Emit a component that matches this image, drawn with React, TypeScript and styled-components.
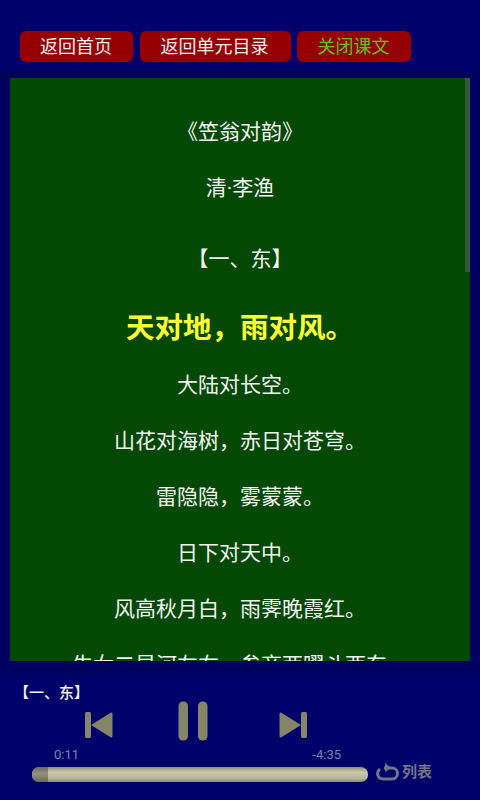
import styled, { createGlobalStyle } from 'styled-components';

const cjk = `'Roboto', 'Noto Sans CJK SC', sans-serif`;

const GlobalStyle = createGlobalStyle`
  html, body {
    background-color: #00006a;
    margin: 0;
    padding: 0;
  }
`;

interface LineProps {
  gap?: number
}

interface NavButtonProps {
  width: number
  active?: boolean
}

const lines = [
  '大陆对长空。',
  '山花对海树，赤日对苍穹。',
  '雷隐隐，雾蒙蒙。',
  '日下对天中。',
  '风高秋月白，雨霁晚霞红。',
  '牛女二星河左右，参商两曜斗西东。',
];

const PrevIcon = () => (
  <SkipSvg viewBox="0 0 30 30">
    <rect x="1" y="2" width="6" height="26" rx="1.5" fill="#85856a" />
    <path d="M7 15 L27 2.500 Q28.500 2 28.500 4 L28.500 26 Q28.500 28 27 27.500 Z" fill="#85856a" />
  </SkipSvg>
);

const NextIcon = () => (
  <NextSvg viewBox="0 0 30 30">
    <rect x="23" y="2" width="6" height="26" rx="1.500" fill="#85856a" />
    <path d="M23 15 L3 2.500 Q1.500 2 1.500 4 L1.500 26 Q1.500 28 3 27.500 Z" fill="#85856a" />
  </NextSvg>
);

const PauseIcon = () => (
  <svg width="30" height="40" viewBox="0 0 30 40">
    <rect x="0.500" y="0.500" width="9.500" height="39" rx="4.500" fill="#85856a" />
    <rect x="20" y="0.500" width="9.500" height="39" rx="4.500" fill="#85856a" />
  </svg>
);

const LoopIcon = () => (
  <svg width="24" height="18" viewBox="0 0 24 18">
    <path d="M8 5 H16 A5.500 5.500 0 0 1 16 16 H7 A5.500 5.500 0 0 1 4 6" fill="none" stroke="#73748c" strokeWidth="3" />
    <path d="M9 0 L15 5 L9 9 Z" fill="#73748c" />
  </svg>
);

export default function App() {
  return (
    <Page>
      <GlobalStyle />
      <Toolbar>
        <NavButton width={113}>返回首页</NavButton>
        <NavButton width={151}>返回单元目录</NavButton>
        <NavButton width={114} active>关闭课文</NavButton>
      </Toolbar>
      <PanelFrame>
        <TextPanel>
          <ScrollThumb />
          <Line>《笠翁对韵》</Line>
          <Line>清·李渔</Line>
          <Line gap={15}>【一、东】</Line>
          <CurrentLine gap={14}>天对地，雨对风。</CurrentLine>
          {lines.map(line => (
            <Line key={line}>{line}</Line>
          ))}
        </TextPanel>
      </PanelFrame>
      <Player>
        <TrackTitle>【一、东】</TrackTitle>
        <Controls>
          <PrevIcon />
          <PauseIcon />
          <NextIcon />
        </Controls>
        <Times>
          <span>0:11</span>
          <span>-4:35</span>
        </Times>
        <SeekRow>
          <SeekBar>
            <SeekFill />
          </SeekBar>
          <LoopMode>
            <LoopIcon />
            <LoopLabel>列表</LoopLabel>
          </LoopMode>
        </SeekRow>
      </Player>
    </Page>
  );
}

const Page = styled.div`
  background-color: #00006a;
  display: flex;
  flex-direction: column;
  font-family: ${cjk};
  height: 800px;
  overflow: hidden;
  width: 480px;
`;

const Toolbar = styled.div`
  display: flex;
  gap: 6.500px;
  padding: 31px 0 0 20px;
`;

const NavButton = styled.div<NavButtonProps>`
  align-items: center;
  background-color: #960000;
  border-radius: 6px;
  box-sizing: border-box;
  color: ${({ active }) => (active ? '#5fc41a' : '#f4f0f0')};
  display: flex;
  font-size: 18px;
  height: 31px;
  justify-content: center;
  padding: 0 1px 3px 0;
  width: ${({ width }) => `${width}px`};
`;

const PanelFrame = styled.div`
  background-color: #000060;
  height: 597px;
  margin-top: 9px;
  padding: 7px 10px 0;
`;

const TextPanel = styled.div`
  background-color: #034803;
  box-sizing: border-box;
  color: #f2f7f2;
  height: 583px;
  overflow: hidden;
  padding-top: 26px;
  position: relative;
  text-align: center;
  width: 460px;
`;

const ScrollThumb = styled.div`
  background-color: #2f5a3c;
  height: 194px;
  position: absolute;
  right: 0;
  top: 0;
  width: 5px;
`;

const Line = styled.div<LineProps>`
  font-size: 21px;
  line-height: 56px;
  margin-top: ${({ gap }) => gap ?? 0}px;
  white-space: nowrap;
`;

const CurrentLine = styled(Line)`
  color: #ffff33;
  font-size: 28.500px;
  font-weight: 700;
`;

const Player = styled.div`
  display: flex;
  flex-direction: column;
  padding: 9px 0 0 20px;
`;

const TrackTitle = styled.div`
  color: #f4f4ff;
  font-size: 15px;
  font-weight: 500;
  line-height: 18px;
  margin-left: -6px;
`;

const Controls = styled.div`
  align-items: flex-start;
  display: flex;
  gap: 64px;
  height: 40px;
  margin: -1px 0 0 64px;
`;

const SkipSvg = styled.svg`
  height: 30px;
  margin-top: 9px;
  width: 30px;
`;

const NextSvg = styled(SkipSvg)`
  margin-left: 6px;
`;

const Times = styled.div`
  color: #8080a6;
  display: flex;
  font-size: 13px;
  justify-content: space-between;
  line-height: 14px;
  margin: 7px 0 0 34px;
  width: 287px;
`;

const SeekRow = styled.div`
  align-items: flex-start;
  display: flex;
  gap: 8px;
  margin-left: 12px;
`;

const SeekBar = styled.div`
  background: linear-gradient(#8f8f78, #c9c9ac 35%, #b7b79b 75%, #8a8a78);
  border-radius: 7px;
  height: 15px;
  margin-top: 5px;
  overflow: hidden;
  width: 336px;
`;

const SeekFill = styled.div`
  background: linear-gradient(#6a6a5c, #92927c 45%, #6a6a5c);
  height: 100%;
  width: 16px;
`;

const LoopMode = styled.div`
  align-items: center;
  display: flex;
  gap: 2px;
  margin-top: 1px;
`;

const LoopLabel = styled.span`
  color: #73748c;
  font-size: 15px;
  font-weight: 700;
  line-height: 18px;
`;
